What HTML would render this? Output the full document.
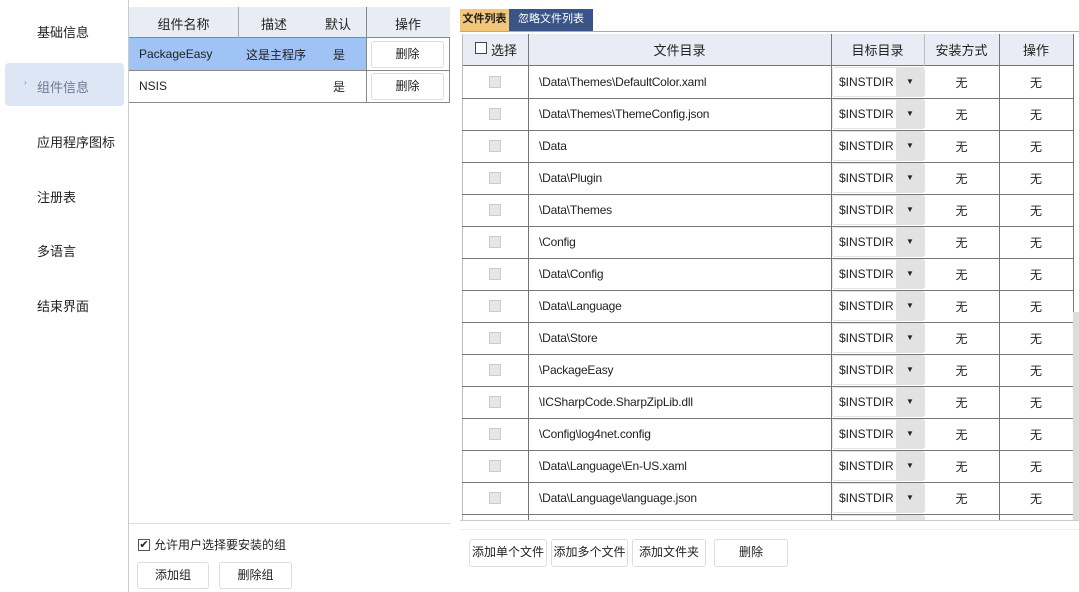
<!DOCTYPE html><html><head><meta charset="utf-8"><style>
*{box-sizing:border-box;margin:0;padding:0}
body{width:1079px;height:592px;overflow:hidden;background:#fff;font-family:"Liberation Sans","Noto Sans CJK SC",sans-serif;font-size:12px;color:#222;position:relative}
.a{position:absolute}
.nav{left:37px;font-size:13px}
.btn{position:absolute;border:1px solid #ddd;border-radius:3px;background:#fff;text-align:center;font-size:12px}
.c{position:absolute;text-align:center}
#clip{position:absolute;left:0;top:0;width:1079px;height:520px;overflow:hidden}
</style></head><body>
<div class="a" style="left:0;top:0;width:129px;height:592px;border-right:1px solid #ccc"></div>
<div class="a nav" style="top:22px">基础信息</div>
<div class="a" style="left:5px;top:63px;width:119px;height:43px;background:#dce6f4;border-radius:4px"></div>
<div class="a" style="left:24px;top:78px;font-size:8px;color:#888">›</div>
<div class="a nav" style="top:77px;color:#6a7a96">组件信息</div>
<div class="a nav" style="top:132px">应用程序图标</div>
<div class="a nav" style="top:187px">注册表</div>
<div class="a nav" style="top:241px">多语言</div>
<div class="a nav" style="top:296px">结束界面</div>

<div class="a" style="left:129px;top:7px;width:321px;height:96px;border:1px solid #888;border-left:none;border-top:none"></div>
<div class="a" style="left:129px;top:7px;width:321px;height:31px;background:#e9ecf4;border-bottom:1px solid #888"></div>
<div class="a" style="left:238px;top:7px;width:1px;height:31px;background:#aaa"></div>
<div class="a" style="left:366px;top:7px;width:1px;height:96px;background:#888"></div>
<div class="c" style="left:129px;width:109px;top:14px;font-size:13px">组件名称</div>
<div class="c" style="left:238px;width:72px;top:14px;font-size:13px">描述</div>
<div class="c" style="left:310px;width:56px;top:14px;font-size:13px">默认</div>
<div class="c" style="left:366px;width:84px;top:14px;font-size:13px">操作</div>
<div class="a" style="left:129px;top:38px;width:237px;height:32px;background:#9fc3f5"></div>
<div class="a" style="left:129px;top:70px;width:321px;height:1px;background:#888"></div>
<div class="a" style="left:139px;top:47px">PackageEasy</div>
<div class="c" style="left:238px;width:76px;top:46px">这是主程序</div>
<div class="c" style="left:310px;width:58px;top:46px">是</div>
<div class="btn" style="left:371px;top:41px;width:73px;height:27px;line-height:24px">删除</div>
<div class="a" style="left:139px;top:79px">NSIS</div>
<div class="c" style="left:310px;width:58px;top:78px">是</div>
<div class="btn" style="left:371px;top:73px;width:73px;height:27px;line-height:24px">删除</div>

<div class="a" style="left:129px;top:523px;width:321px;height:1px;background:#ddd"></div>
<div class="a" style="left:138px;top:539px;width:12px;height:12px;border:1px solid #555;font-size:11px;line-height:10px;text-align:center">✔</div>
<div class="a" style="left:154px;top:536px;font-size:12px">允许用户选择要安装的组</div>
<div class="btn" style="left:137px;top:562px;width:72px;height:27px;line-height:24px">添加组</div>
<div class="btn" style="left:219px;top:562px;width:73px;height:27px;line-height:24px">删除组</div>

<div class="a" style="left:460px;top:9px;width:49px;height:22px;background:#f3c67a;font-size:11px;font-weight:bold;line-height:20px;text-align:center">文件列表</div>
<div class="a" style="left:509px;top:9px;width:84px;height:22px;background:#3a5488;color:#fff;font-size:11px;line-height:20px;text-align:center">忽略文件列表</div>
<div class="a" style="left:460px;top:31px;width:619px;height:1px;background:#aaa"></div>

<div id="clip">
<div class="a" style="left:462px;top:34px;width:611px;height:32px;background:#e9ecf4;border-bottom:1px solid #777"></div>
<div class="a" style="left:462px;top:34px;width:1px;height:486px;background:#bbb"></div>
<div class="a" style="left:528px;top:34px;width:1px;height:486px;background:#777"></div>
<div class="a" style="left:831px;top:34px;width:1px;height:486px;background:#777"></div>
<div class="a" style="left:924px;top:34px;width:1px;height:32px;background:#bbb"></div>
<div class="a" style="left:999px;top:34px;width:1px;height:486px;background:#777"></div>
<div class="a" style="left:1073px;top:34px;width:1px;height:486px;background:#777"></div>
<div class="a" style="left:475px;top:42px;width:12px;height:12px;border:1px solid #444;background:#fff"></div>
<div class="a" style="left:491px;top:40px;font-size:13px">选择</div>
<div class="c" style="left:528px;width:303px;top:40px;font-size:13px">文件目录</div>
<div class="c" style="left:831px;width:93px;top:40px;font-size:13px">目标目录</div>
<div class="c" style="left:924px;width:75px;top:40px;font-size:13px">安装方式</div>
<div class="c" style="left:999px;width:74px;top:40px;font-size:13px">操作</div>
<div id="rows"></div>
<div class="a" style="left:1073px;top:312px;width:6px;height:208px;background:#ddd"></div>
</div>
<div class="a" style="left:460px;top:520px;width:619px;height:1px;background:#ccc"></div>
<div class="a" style="left:460px;top:529px;width:619px;height:1px;background:#eee"></div>

<div class="btn" style="left:469px;top:539px;width:78px;height:28px;line-height:25px">添加单个文件</div>
<div class="btn" style="left:551px;top:539px;width:77px;height:28px;line-height:25px">添加多个文件</div>
<div class="btn" style="left:632px;top:539px;width:74px;height:28px;line-height:25px">添加文件夹</div>
<div class="btn" style="left:714px;top:539px;width:74px;height:28px;line-height:25px">删除</div>
<script>
var f=["\\Data\\Themes\\DefaultColor.xaml","\\Data\\Themes\\ThemeConfig.json","\\Data","\\Data\\Plugin","\\Data\\Themes","\\Config","\\Data\\Config","\\Data\\Language","\\Data\\Store","\\PackageEasy","\\ICSharpCode.SharpZipLib.dll","\\Config\\log4net.config","\\Data\\Language\\En-US.xaml","\\Data\\Language\\language.json",""];
var h="";
f.forEach(function(s,i){var t=66+32*i;
h+='<div class="a" style="left:462px;top:'+(t+32)+'px;width:611px;height:1px;background:#777"></div>';
h+='<div class="a" style="left:832px;top:'+(t+1)+'px;width:93px;height:30px;border:1px solid #e4e4e4;border-radius:3px;background:#fff"></div>';
h+='<div class="a" style="left:896px;top:'+(t+1)+'px;width:29px;height:30px;background:#e2e2e2;border-radius:3px"></div>';
if(i<14){
h+='<div class="a" style="left:489px;top:'+(t+10)+'px;width:12px;height:12px;border:1px solid #ccc;background:#e6e6e6"></div>';
h+='<div class="a" style="left:539px;top:'+(t+9)+'px;letter-spacing:-0.2px">'+s+'</div>';
h+='<div class="a" style="left:839px;top:'+(t+9)+'px;font-size:12px">$INSTDIR</div>';
h+='<div class="a" style="left:906px;top:'+(t+11)+'px;font-size:8px">▼</div>';
h+='<div class="c" style="left:924px;width:75px;top:'+(t+8)+'px">无</div>';
h+='<div class="c" style="left:999px;width:74px;top:'+(t+8)+'px">无</div>';}
});
document.getElementById("rows").innerHTML=h;
</script>
</body></html>
